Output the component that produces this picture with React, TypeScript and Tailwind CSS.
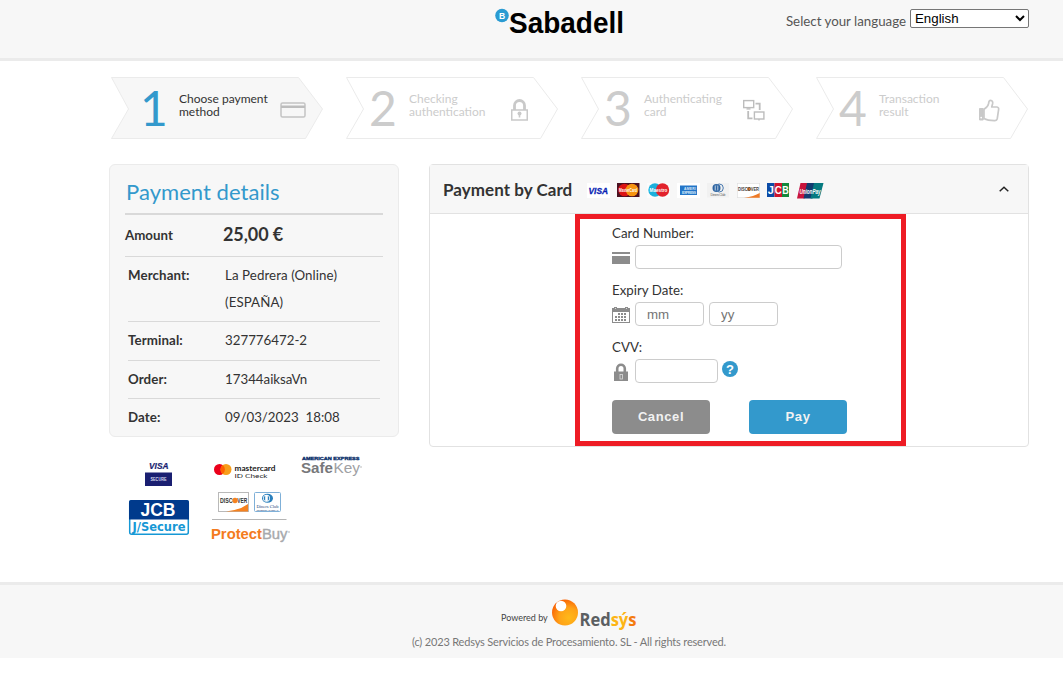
import type { ReactNode } from "react"

const Sans = "'Liberation Sans', Arial, sans-serif"
const Lato = "Lato, sans-serif"

function CardIcon() {
  return (
    <svg width="26" height="16" viewBox="0 0 26 16" fill="none">
      <rect x="1" y="1" width="24" height="14" rx="1.5" stroke="#c4c4c4" strokeWidth="1.5" />
      <rect x="1" y="3.5" width="24" height="2.5" fill="#bdbdbd" />
    </svg>
  )
}

function LockOutlineIcon() {
  return (
    <svg width="17" height="22" viewBox="0 0 17 22" fill="none" stroke="#c9c9c9">
      <rect x="0.75" y="11" width="15.5" height="10" strokeWidth="1.5" />
      <path d="M3.5 11V6.5a5 5 0 0 1 10 0V11" strokeWidth="2.8" />
      <circle cx="8.5" cy="14.5" r="2" fill="#c9c9c9" stroke="none" />
      <path d="M8.5 15v3.5" strokeWidth="1.6" />
    </svg>
  )
}

function ScreensIcon() {
  return (
    <svg width="22" height="22" viewBox="0 0 22 22" fill="none" stroke="#bdbdbd" strokeWidth="1.4">
      <rect x="0.7" y="1.6" width="10" height="7" />
      <path d="M3.5 9.9h4" />
      <rect x="11.4" y="13" width="9.5" height="7" />
      <path d="M16 20v1.6" />
      <path d="M12.5 4.6h4.2v6.4M5.2 12v7.4H9.5" strokeWidth="1.8" />
    </svg>
  )
}

function ThumbIcon() {
  return (
    <svg width="22" height="23" viewBox="0 0 22 23" fill="none" stroke="#c9c9c9" strokeLinejoin="round">
      <path
        d="M6 10.2c2.5-1.3 4-3 4.6-5.6.1-1.8.6-3.3 2-3.3 1.7 0 2.4 1.7 2 3.5l-.9 3.2h5.2c1.5.2 2 1.2 1.7 2.6l-1.3 8.8c-.3 1.6-1.2 2.3-3 2.2-4.3 0-7.3-.4-10.3-2.1z"
        strokeWidth="1.7"
      />
      <path d="M1.5 9.5h3.7v11.5h-3.7z" fill="#c9c9c9" strokeWidth="1" />
      <circle cx="3.2" cy="18.6" r="0.9" fill="#fff" stroke="none" />
    </svg>
  )
}

type StepProps = {
  number: string
  title: string
  subtitle: string
  icon: ReactNode
  active?: boolean
}

function Step({ number, title, subtitle, icon, active }: StepProps) {
  return (
    <li className="relative h-[63px] w-[212px]">
      <svg className="absolute inset-0" width="212" height="63" viewBox="0 0 212 63">
        <path
          d="M.5 .5H187.5L211.5 32L194.5 61.5H.5L17.5 32Z"
          fill={active ? "#f7f7f7" : "#fff"}
          stroke="#ebebeb"
        />
      </svg>
      <div className={"relative flex h-full " + (active ? "text-[#333]" : "text-[#ccc]")}>
        <span
          className={
            "text-[48px] leading-[61px] " +
            (active ? "w-[68px] pl-[29px] text-[#3399cc]" : "w-[63px] pl-[23px]")
          }
        >
          {number}
        </span>
        <span className="w-[90px] whitespace-nowrap pt-[15px] text-[12px] leading-[13px]">
          {title}
          <br />
          {subtitle}
        </span>
        <span className={"flex w-[42px] items-center justify-center pt-[3px] " + (active ? "ml-[3px]" : "ml-[-1px]")}>{icon}</span>
      </div>
    </li>
  )
}

function BrandStrip() {
  return (
    <div className="ml-[14px] flex gap-[7px] pt-[4px]">
      <svg width="23" height="15" viewBox="0 0 23 15">
        <rect width="23" height="15" fill="#fff" />
        <text x="1.5" y="10.5" fontFamily={Sans} fontSize="9.5" fontWeight="700" fontStyle="italic" fill="#0a1fb4" stroke="#0a1fb4" strokeWidth=".3" textLength="19.5" lengthAdjust="spacingAndGlyphs">VISA</text>
      </svg>
      <svg width="23" height="15" viewBox="0 0 23 15">
        <rect width="22.5" height="14" fill="#4a1020" />
        <circle cx="7.5" cy="7" r="6.3" fill="#dc1414" />
        <circle cx="15" cy="7" r="6.3" fill="#f79410" />
        <text x="2" y="8.8" fontFamily={Sans} fontSize="4.5" fontWeight="700" fill="#fff" textLength="18" lengthAdjust="spacingAndGlyphs">MasterCard</text>
      </svg>
      <svg className="overflow-visible" width="23" height="15" viewBox="0 0 23 15">
        <rect width="23" height="15" fill="#fbfbfb" />
        <circle cx="8" cy="7" r="6.7" fill="#1cb0dc" />
        <circle cx="15.5" cy="7" r="6.7" fill="#e2222c" />
        <text x="2.5" y="9" fontFamily={Sans} fontSize="5.2" fontWeight="700" fill="#fff" textLength="18" lengthAdjust="spacingAndGlyphs">Maestro</text>
      </svg>
      <svg width="23" height="15" viewBox="0 0 23 15">
        <rect width="23" height="15" fill="#fff" />
        <rect x="3" y="2.5" width="17" height="9.5" fill="#2375c8" />
        <text x="7" y="6.6" fontFamily={Sans} fontSize="3.4" fontWeight="700" fill="#dcebfa" textLength="12">AMERI</text>
        <text x="5" y="10.6" fontFamily={Sans} fontSize="3.4" fontWeight="700" fill="#dcebfa" textLength="14">EXPRESS</text>
      </svg>
      <svg width="23" height="15" viewBox="0 0 23 15">
        <rect width="22" height="14.5" fill="#f1f1f1" />
        <circle cx="9.5" cy="5" r="4" fill="#2b62a0" />
        <circle cx="12.3" cy="5" r="4" fill="none" stroke="#4a7ab0" />
        <path d="M8.2 2.5v5M10.8 2.5v5" stroke="#dce6f0" strokeWidth=".8" />
        <text x="3.5" y="12.5" fontFamily={Sans} fontSize="3.5" fill="#666" textLength="15">Diners Club</text>
      </svg>
      <svg width="23" height="15" viewBox="0 0 23 15">
        <rect x=".3" y=".3" width="22.4" height="14.4" fill="#fff" stroke="#ddd" strokeWidth=".6" />
        <path d="M22.7 10v4.7H7Q17 13.5 22.7 10Z" fill="#ee7a26" />
        <circle cx="12" cy="6" r="1.9" fill="#ee7a26" />
        <text x="1" y="7.8" fontFamily={Sans} fontSize="4.6" fontWeight="700" fill="#444" textLength="21" lengthAdjust="spacingAndGlyphs">DISCOVER</text>
      </svg>
      <svg width="23" height="15" viewBox="0 0 23 15">
        <rect width="7.5" height="14" fill="#0b4ba6" />
        <rect x="7.5" width="7.5" height="14" fill="#d0142c" />
        <rect x="15" width="7" height="14" fill="#14883c" />
        <g fontFamily={Sans} fontSize="11" fontWeight="700" fill="#fff">
          <text x=".8" y="11">J</text>
          <text x="7.7" y="11" textLength="7" lengthAdjust="spacingAndGlyphs">C</text>
          <text x="15.2" y="11" textLength="6.5" lengthAdjust="spacingAndGlyphs">B</text>
        </g>
      </svg>
      <svg className="overflow-visible" width="27" height="16" viewBox="0 0 27 16">
        <path d="M3.5 0H11L7.5 15.5H0Z" fill="#c8143c" />
        <path d="M10 0H19L15.5 15.5H6.5Z" fill="#123c70" />
        <path d="M17 0H26.5L22.5 15.5H13.5Z" fill="#067a80" />
        <text x="2.5" y="10.5" fontFamily={Sans} fontSize="7.5" fontWeight="700" fontStyle="italic" fill="#fff" textLength="21" lengthAdjust="spacingAndGlyphs">UnionPay</text>
      </svg>
    </div>
  )
}

const details = [
  { label: "Terminal:", value: "327776472-2" },
  { label: "Order:", value: "17344aiksaVn" },
  { label: "Date:", value: "09/03/2023\u00a0 18:08" },
]

function PaymentDetails() {
  return (
    <section className="h-[273px] w-[290px] rounded-md border border-[#ebebeb] bg-[#f7f7f7] px-[15px] text-[13.3px] text-[#333]">
      <h2 className="h-[50px] border-b-2 border-[#d9d9d9] pl-px text-[22px] leading-[54px] tracking-[0.05px] text-[#3399cc]">
        Payment details
      </h2>
      <div className="flex h-[42px] items-center border-b border-[#d9d9d9]">
        <span className="w-[98px] font-bold">Amount</span>
        <span className="pb-[2px] text-[18px] font-bold tracking-[-0.1px]">25,00 €</span>
      </div>
      <div className="mx-[3px]">
        <div className="flex h-[65px] border-b border-[#d9d9d9] pt-[5px] leading-[27px]">
          <span className="w-[97px] font-bold tracking-[0.1px]">Merchant:</span>
          <span className="tracking-[0.08px]">
            La Pedrera (Online)
            <br />
            (ESPAÑA)
          </span>
        </div>
        {details.map((row) => (
          <div key={row.label} className="flex h-[38.5px] items-center border-b border-[#d9d9d9] pt-px last:border-b-0 last:pt-0 last:pb-px">
            <span className="w-[97px] font-bold tracking-[0.1px]">{row.label}</span>
            <span>{row.value}</span>
          </div>
        ))}
      </div>
    </section>
  )
}

function SecurityLogos() {
  return (
    <svg className="mt-[13px]" width="290" height="100" viewBox="109 450 290 100">
      <g fontFamily={Sans}>
        <text x="149" y="469" fontSize="8.5" fontWeight="700" fontStyle="italic" fill="#1a1f71" stroke="#1a1f71" strokeWidth=".2" textLength="19.5" lengthAdjust="spacingAndGlyphs">VISA</text>
        <rect x="145" y="472.5" width="27" height="13.5" fill="#1a1f71" />
        <text x="150.5" y="481" fontSize="4.5" fontWeight="700" fill="#d8d9ee" textLength="16" lengthAdjust="spacingAndGlyphs">SECURE</text>

        <rect x="129.7" y="500.7" width="58.6" height="33.6" rx="2" fill="#fff" stroke="#1698d5" strokeWidth="1.5" />
        <path d="M129 519.5V502a2 2 0 0 1 2-2h56a2 2 0 0 1 2 2v17.5z" fill="#003a8c" />
        <text x="140.5" y="516.3" fontSize="18.5" fontWeight="700" fill="#fff" textLength="35" lengthAdjust="spacingAndGlyphs">JCB</text>
      </g>
      <text x="132.5" y="530.5" fontFamily="'DejaVu Sans', sans-serif" fontSize="11.5" fontWeight="700" fill="#1698d5" textLength="53" lengthAdjust="spacingAndGlyphs">J/Secure</text>

      <circle cx="219.5" cy="469.5" r="5.5" fill="#eb001b" />
      <circle cx="226" cy="469.5" r="5.5" fill="#f79e1b" />
      <path d="M222.75 465.1a5.5 5.5 0 0 1 0 8.8a5.5 5.5 0 0 1 0-8.8z" fill="#ff5f00" />
      <g fontFamily={Lato} fill="#222">
        <text x="234.5" y="471.3" fontSize="7" fontWeight="700" textLength="41" lengthAdjust="spacingAndGlyphs">mastercard</text>
        <text x="234.5" y="478.3" fontSize="6.2" textLength="33" lengthAdjust="spacingAndGlyphs">ID Check</text>
      </g>

      <text x="302" y="460" fontFamily={Sans} fontSize="4" fontWeight="700" fill="#0b2f6b" stroke="#0b2f6b" strokeWidth=".3" textLength="57.5" lengthAdjust="spacingAndGlyphs">AMERICAN EXPRESS</text>
      <g fontFamily={Sans} fontSize="14.5">
        <text x="301" y="473" fontWeight="700" fill="#77787b" textLength="32" lengthAdjust="spacingAndGlyphs">Safe</text>
        <text x="333.5" y="473" fill="#a0a1a4" textLength="26.5" lengthAdjust="spacingAndGlyphs">Key</text>
      </g>
      <circle cx="361" cy="467" r=".7" fill="#a0a1a4" />

      <rect x="218.5" y="492.5" width="30" height="19" fill="#fff" stroke="#b9b9b9" />
      <path d="M248 504v7.5h-22Q240 510 248 504Z" fill="#f58220" />
      <circle cx="235" cy="500.5" r="2.7" fill="#f58220" />
      <g fontFamily={Sans} fontSize="6.3" fontWeight="700" fill="#333">
        <text x="220" y="502.8" textLength="12.5" lengthAdjust="spacingAndGlyphs">DISC</text>
        <text x="237.3" y="502.8" textLength="10" lengthAdjust="spacingAndGlyphs">VER</text>
      </g>

      <rect x="254.5" y="492.5" width="26" height="19" rx="1" fill="#fff" stroke="#7fb0d8" />
      <ellipse cx="267.5" cy="498.3" rx="5.5" ry="4.5" fill="#2b80bd" />
      <circle cx="266.5" cy="498.3" r="3.5" fill="#fff" />
      <path d="M265.2 495.7a3 3 0 0 0 0 5.2zM267.8 495.7a3 3 0 0 1 0 5.2z" fill="#2b80bd" />
      <text x="256.5" y="507.5" fontFamily="'Liberation Serif', serif" fontSize="5" fill="#234a7c" textLength="22" lengthAdjust="spacingAndGlyphs">Diners Club</text>
      <text x="256.5" y="510.6" fontFamily={Sans} fontSize="2.2" fill="#234a7c" textLength="22" lengthAdjust="spacingAndGlyphs">INTERNATIONAL</text>

      <path d="M212 519.5h74.5" stroke="#b5b5b5" />
      <text x="211" y="539" fontFamily={Sans} fontSize="15.5" fontWeight="700" fill="#f47b20" textLength="76.5" lengthAdjust="spacingAndGlyphs">
        Protect<tspan fontWeight="400" fill="#a7a9ac" stroke="#a7a9ac" strokeWidth=".4">Buy</tspan>
      </text>
      <circle cx="289" cy="532" r=".8" fill="#a7a9ac" />
    </svg>
  )
}

function CalendarIcon() {
  return (
    <svg width="18" height="16" viewBox="0 0 18 16" shapeRendering="crispEdges">
      <path d="M0 1h18v15H0z" fill="#8c8c8c" />
      <rect x="1" y="5" width="16" height="10" fill="#fff" />
      <path d="M2 0h3v2H2zM13 0h3v2h-3z" fill="#8c8c8c" />
      <path d="M3 1h1v1H3zM14 1h1v1h-1z" fill="#d8d8d8" />
      <path d="M6 7h9M3 10h12M3 13h12" stroke="#8c8c8c" strokeWidth="2" strokeDasharray="2 1" />
    </svg>
  )
}

function LockIcon() {
  return (
    <svg width="14" height="18" viewBox="0 0 14 18" fill="none">
      <path d="M3.2 9V5.5a3.8 3.8 0 0 1 7.6 0V9" stroke="#8c8c8c" strokeWidth="2.6" />
      <rect y="8.5" width="14" height="9.5" fill="#8c8c8c" />
      <rect x="6" y="11.5" width="2.5" height="4.5" stroke="#ddd" strokeWidth=".8" />
    </svg>
  )
}

const inputClass =
  "h-6 rounded-[4px] border border-[#ccc] bg-white pl-[11px] font-['Liberation_Sans',Arial,sans-serif] text-[13.3px] placeholder-[#757575] outline-none"

function CardForm() {
  return (
    <form className="ml-[145px] h-[232px] w-[331px] border-[5px] border-[#ee1c25] pl-8 pt-1 text-[13.3px] text-[#333]">
      <label className="block h-[22px] leading-[20px]">Card Number:</label>
      <div className="flex">
        <span className="mt-[7px] w-[23px]">
          <svg width="18" height="12" viewBox="0 0 18 12" shapeRendering="crispEdges">
            <path d="M0 0h18v2H0zM0 4h18v8H0z" fill="#8c8c8c" />
          </svg>
        </span>
        <input className={inputClass + " w-[207px]"} />
      </div>
      <label className="mt-[11px] block h-[22px] leading-[20px]">Expiry Date:</label>
      <div className="flex">
        <span className="mt-[5px] w-[23px]">
          <CalendarIcon />
        </span>
        <input className={inputClass + " w-[69px]"} placeholder="mm" />
        <input className={inputClass + " ml-[5px] w-[69px]"} placeholder="yy" />
      </div>
      <label className="mt-[11px] block h-[22px] leading-[20px]">CVV:</label>
      <div className="flex">
        <span className="mt-1 w-[23px] pl-[2px]">
          <LockIcon />
        </span>
        <input className={inputClass + " w-[83px]"} />
        <span className="ml-1 mt-[2px] flex size-4 items-center justify-center rounded-full bg-[#3399cc] font-['Liberation_Sans',Arial,sans-serif] text-[13px] font-bold leading-none text-white">
          ?
        </span>
      </div>
      <div className="mt-[17px] flex gap-[39px] font-['Liberation_Sans',Arial,sans-serif] text-[13px] font-bold tracking-[0.6px] text-[#f2f2f2]">
        <button type="button" className="h-[34px] w-[98px] rounded-[4px] bg-[#8c8c8c]">Cancel</button>
        <button type="button" className="h-[34px] w-[98px] rounded-[4px] bg-[#3399cc]">Pay</button>
      </div>
    </form>
  )
}

export default function App() {
  return (
    <div className="h-[685px] w-[1063px] overflow-hidden bg-white font-[Lato,sans-serif]">
      <header className="flex h-[61px] justify-end border-b-[3px] border-[#ebebeb] bg-[#f7f7f7] pr-[34px]">
        <svg className="mr-[156px] mt-[7px]" width="135" height="40" viewBox="0 0 135 40">
          <circle cx="7" cy="8.5" r="6.8" fill="#2a9bd2" />
          <text x="4" y="11.5" fontFamily={Sans} fontSize="8.5" fontWeight="700" fill="#fff">B</text>
          <text x="14" y="26" fontFamily={Sans} fontSize="29" fontWeight="700" fill="#000" textLength="115" lengthAdjust="spacingAndGlyphs">Sabadell</text>
        </svg>
        <div className="flex pt-[9px]">
          <span className="mr-1 pt-[3px] text-[13.3px] leading-[18px] text-[#555]">Select your language</span>
          <select className="h-[19px] w-[119px] appearance-auto rounded-[2px] border border-[#767676] bg-white font-['Liberation_Sans',Arial,sans-serif] text-[13.3px] text-black">
            <option>English</option>
          </select>
        </div>
      </header>

      <ol className="ml-[111px] mt-4 flex gap-[23px]">
        <Step number="1" title="Choose payment" subtitle="method" icon={<CardIcon />} active />
        <Step number="2" title="Checking" subtitle="authentication" icon={<LockOutlineIcon />} />
        <Step number="3" title="Authenticating" subtitle="card" icon={<ScreensIcon />} />
        <Step number="4" title="Transaction" subtitle="result" icon={<ThumbIcon />} />
      </ol>

      <main className="ml-[109px] mt-6 flex h-[418px] gap-[30px]">
        <div>
          <PaymentDetails />
          <SecurityLogos />
        </div>
        <section className="h-[283px] w-[600px] rounded-[4px] border border-[#e2e2e2]">
          <div className="flex h-[49px] items-center border-b border-[#e2e2e2] bg-[#f7f7f7] pl-[13px] pr-[19px]">
            <h3 className="w-[130px] whitespace-nowrap pt-px text-[17px] font-bold tracking-[0.05px] text-[#333]">Payment by Card</h3>
            <BrandStrip />
            <svg className="ml-auto" width="10" height="6" viewBox="0 0 10 6" fill="none">
              <path d="M.7 5.3L5 1.3l4.3 4" stroke="#222" strokeWidth="1.5" />
            </svg>
          </div>
          <CardForm />
        </section>
      </main>

      <footer className="h-[76px] border-t-[3px] border-[#ebebeb] bg-[#f7f7f7] pl-[75px]">
        <div className="ml-[426px] flex h-[48px]">
          <span className="w-[51px] whitespace-nowrap pt-[26px] text-[9px] leading-[14px] text-[#444]">Powered by</span>
          <svg className="mt-[14px]" width="86" height="34" viewBox="0 0 86 34">
            <defs>
              <radialGradient id="sun" cx=".65" cy=".7" r=".75">
                <stop offset="0" stopColor="#ffb91a" />
                <stop offset=".5" stopColor="#ffa318" />
                <stop offset="1" stopColor="#f95f04" />
              </radialGradient>
            </defs>
            <circle cx="13" cy="13.5" r="13" fill="url(#sun)" />
            <circle cx="9" cy="7" r="5.3" fill="#fff" />
            <text x="27.5" y="26.5" fontFamily="'Open Sans', sans-serif" fontSize="17" fontWeight="700" fill="#5b5f62" textLength="57" lengthAdjust="spacingAndGlyphs">
              Red<tspan fill="#fdb515">sý</tspan><tspan fill="#f47b10">s</tspan>
            </text>
          </svg>
        </div>
        <p className="ml-[337px] text-[11px] leading-[17px] tracking-[-0.17px] text-[#777]">
          (c) 2023 Redsys Servicios de Procesamiento. SL - All rights reserved.
        </p>
      </footer>
    </div>
  )
}
